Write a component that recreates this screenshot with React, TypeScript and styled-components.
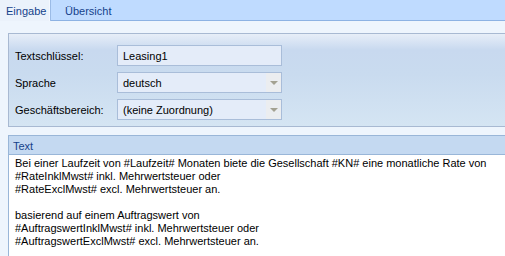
import React from "react";
import styled, { createGlobalStyle } from "styled-components";

const Global = createGlobalStyle`
  *, *::before, *::after { box-sizing: border-box; }
  html, body { margin: 0; padding: 0; }
  body {
    width: 505px;
    height: 256px;
    overflow: hidden;
    background: #eef5fd;
    font-family: Tahoma, "Liberation Sans", "DejaVu Sans", sans-serif;
    font-size: 11px;
  }
`;

const Page = styled.div`
  width: 505px;
  height: 256px;
  display: flex;
  flex-direction: column;
  background: #eef5fd;
`;

const TabBar = styled.div`
  height: 21px;
  display: flex;
  align-items: stretch;
  background: #bfdbff;
  border-bottom: 1px solid #8db2e3;
`;

const Tab = styled.div<{ $active?: boolean }>`
  display: flex;
  align-items: center;
  padding: 1px ${(p) => (p.$active ? "6px" : "10px")} 0 ${(p) => (p.$active ? "6px" : "15px")};
  width: ${(p) => (p.$active ? "50px" : "auto")};
  color: #15428b;
  background: ${(p) => (p.$active ? "#ebf2fb" : "transparent")};
  border-right: ${(p) => (p.$active ? "1px solid #f4f8fe" : "none")};
  box-shadow: ${(p) => (p.$active ? "1px 0 0 #9bbbe6" : "none")};
  margin-bottom: ${(p) => (p.$active ? "-1px" : "0")};
`;

const Content = styled.div`
  flex: 1;
  display: flex;
  flex-direction: column;
  padding: 12px 0 0 8px;
  gap: 8px;
`;

const GroupBox = styled.div`
  height: 94px;
  flex: none;
  border: 1px solid #a8b9d2;
  border-right: none;
  background: linear-gradient(
    to bottom,
    #e7eef8 0px,
    #c8d9ef 16px,
    #c9dbef 40px,
    #d5e5f3 94px
  );
  padding: 11px 0 0 6px;
  display: flex;
  flex-direction: column;
  gap: 6px;
`;

const Row = styled.div`
  display: flex;
  align-items: center;
  height: 21px;
`;

const Label = styled.div`
  width: 102px;
  color: #000;
`;

const Field = styled.div`
  width: 165px;
  height: 21px;
  border: 1px solid #a9bdd9;
  background: #e4ecf9;
  display: flex;
  align-items: center;
`;

const FieldText = styled.span`
  flex: 1;
  padding-left: 5px;
  color: #000;
  white-space: nowrap;
`;

const DropButton = styled.div`
  width: 15px;
  height: 19px;
  background: #ebedf0;
  display: flex;
  align-items: center;
  justify-content: center;
`;

const Arrow = styled.div`
  width: 0;
  height: 0;
  border-left: 4px solid transparent;
  border-right: 4px solid transparent;
  border-top: 4px solid #a3a191;
  margin-top: 1px;
`;

const TextSection = styled.div`
  flex: 1;
  display: flex;
  flex-direction: column;
`;

const SectionHeader = styled.div`
  height: 20px;
  flex: none;
  border: 1px solid #99b6d8;
  border-right: none;
  background: #c4d9f1;
  color: #15428b;
  display: flex;
  align-items: center;
  padding: 1px 0 0 4px;
`;

const TextArea = styled.div`
  flex: 1;
  background: #fff;
  border-left: 1px solid #99b6d8;
  padding: 2px 0 0 6px;
  color: #000;
  line-height: 13px;
  white-space: pre;
`;

const text = `Bei einer Laufzeit von #Laufzeit# Monaten biete die Gesellschaft #KN# eine monatliche Rate von
#RateInklMwst# inkl. Mehrwertsteuer oder
#RateExclMwst# excl. Mehrwertsteuer an.

basierend auf einem Auftragswert von
#AuftragswertInklMwst# inkl. Mehrwertsteuer oder
#AuftragswertExclMwst# excl. Mehrwertsteuer an.`;

export default function App() {
  return (
    <Page>
      <Global />
      <TabBar>
        <Tab $active>Eingabe</Tab>
        <Tab>Übersicht</Tab>
      </TabBar>
      <Content>
        <GroupBox>
          <Row>
            <Label>Textschlüssel:</Label>
            <Field>
              <FieldText>Leasing1</FieldText>
            </Field>
          </Row>
          <Row>
            <Label>Sprache</Label>
            <Field>
              <FieldText>deutsch</FieldText>
              <DropButton>
                <Arrow />
              </DropButton>
            </Field>
          </Row>
          <Row>
            <Label>Geschäftsbereich:</Label>
            <Field>
              <FieldText>(keine Zuordnung)</FieldText>
              <DropButton>
                <Arrow />
              </DropButton>
            </Field>
          </Row>
        </GroupBox>
        <TextSection>
          <SectionHeader>Text</SectionHeader>
          <TextArea>{text}</TextArea>
        </TextSection>
      </Content>
    </Page>
  );
}
